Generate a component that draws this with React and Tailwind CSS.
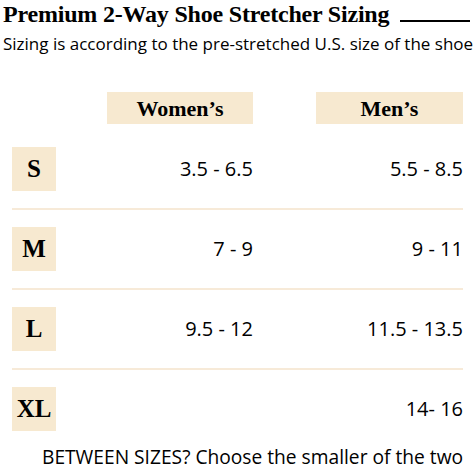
import React from 'react';

const rows = [
  { size: 'S', women: '3.5 - 6.5', men: '5.5 - 8.5' },
  { size: 'M', women: '7 - 9', men: '9 - 11' },
  { size: 'L', women: '9.5 - 12', men: '11.5 - 13.5' },
  { size: 'XL', women: '', men: '14- 16' },
];

const serif = "font-['Liberation_Serif',serif]";
const sans = "font-['Open_Sans',sans-serif]";

export default function App() {
  return (
    <div className="w-[475px] h-[466px] bg-white text-black overflow-hidden">
      {/* Title */}
      <div className="flex items-end pl-[3px] pt-[3px] h-[26px]">
        <h1 className={`${serif} font-bold text-[24px] leading-[24px] tracking-[-0.2px]`}>
          Premium 2-Way Shoe Stretcher Sizing
        </h1>
        <div className="ml-[11px] mb-[4px] w-[70px] h-[2px] bg-black" />
      </div>
      <p className={`${sans} text-[17px] leading-[22px] pl-[3px] mt-[7px] whitespace-nowrap`}>
        Sizing is according to the pre-stretched U.S. size of the shoe
      </p>

      {/* Table */}
      <div className="ml-[12px] w-[451px] mt-[37px]">
        <div className="flex h-[32px]">
          <div className="w-[95px]" />
          <div className={`w-[146px] bg-[#f7e9d0] flex items-center justify-center ${serif} font-bold text-[22px]`}>
            Women’s
          </div>
          <div className="w-[63px]" />
          <div className={`w-[147px] bg-[#f7e9d0] flex items-center justify-center ${serif} font-bold text-[22px]`}>
            Men’s
          </div>
        </div>

        <div className="mt-[23px]">
          {rows.map((r, i) => (
            <div key={r.size}>
              {i > 0 && <div className="h-[2px] bg-[#f7ead8] my-[17px]" />}
              <div className="flex items-center h-[44px]">
                <div className={`w-[44px] h-[44px] bg-[#f7e9d0] flex items-center justify-center ${serif} font-bold text-[25px]`}>
                  {r.size}
                </div>
                <div className={`w-[197px] text-right ${sans} text-[20px]`}>{r.women}</div>
                <div className={`w-[210px] text-right ${sans} text-[20px]`}>{r.men}</div>
              </div>
            </div>
          ))}
        </div>

        <p className={`${sans} text-[19.2px] leading-[16px] mt-[18px] pl-[30px] whitespace-nowrap`}>
          BETWEEN SIZES? Choose the smaller of the two
        </p>
      </div>
    </div>
  );
}
